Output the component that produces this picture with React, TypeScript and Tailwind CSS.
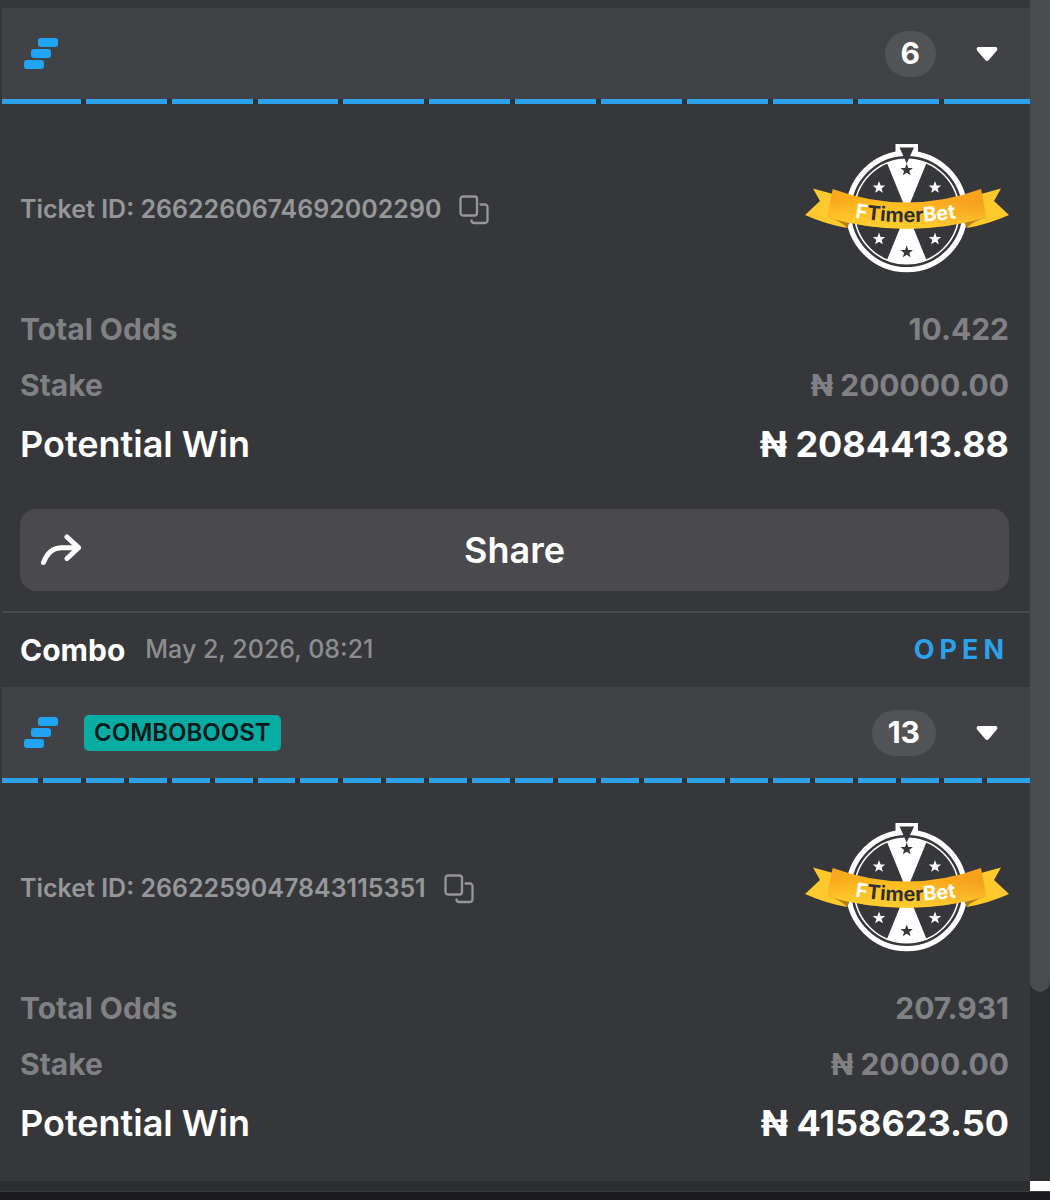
import { useState } from "react";

type Ticket = {
  id: string;
  type?: string;
  date?: string;
  status?: string;
  boost?: string;
  selections: number;
  segments: number;
  odds: string;
  stake: string;
  win: string;
  shareable: boolean;
};

const tickets: Ticket[] = [
  {
    id: "2662260674692002290",
    selections: 6,
    segments: 12,
    odds: "10.422",
    stake: "200000.00",
    win: "2084413.88",
    shareable: true,
  },
  {
    id: "2662259047843115351",
    type: "Combo",
    date: "May 2, 2026, 08:21",
    status: "OPEN",
    boost: "COMBOBOOST",
    selections: 13,
    segments: 24,
    odds: "207.931",
    stake: "20000.00",
    win: "4158623.50",
    shareable: false,
  },
];

function StepsIcon() {
  return (
    <svg className="h-8 w-[34px]" viewBox="0 0 34 32" fill="#22a4f5" aria-hidden="true">
      <rect x="14" y="0" width="20" height="9" rx="3" />
      <rect x="7" y="11" width="20" height="9" rx="3" />
      <rect x="0" y="22" width="20" height="9" rx="3" />
    </svg>
  );
}

function CaretIcon({ open }: { open: boolean }) {
  return (
    <svg className={open ? "h-4 w-[22px]" : "h-4 w-[22px] rotate-180"} viewBox="0 0 22 16" fill="#fff" aria-hidden="true">
      <path d="M2.600 1h16.800c1.900 0 2.600 2 1.500 3.400L12.800 14c-.9 1.200-2.700 1.200-3.600 0L1.100 4.400C0 3 .7 1 2.600 1z" />
    </svg>
  );
}

function CopyIcon() {
  return (
    <svg className="h-[30px] w-[30px]" viewBox="0 0 30 30" fill="none" stroke="#96979b" strokeWidth="2.300" strokeLinecap="round" aria-hidden="true">
      <rect x="1.500" y="1.500" width="16.500" height="19" rx="2.500" />
      <path d="M21.500 9.500H26a2.500 2.500 0 0 1 2.500 2.500V25.500a2.500 2.500 0 0 1-2.500 2.500H15.500C13.500 28 12.500 27 12.500 25.500" />
    </svg>
  );
}

function ShareIcon() {
  return (
    <svg className="h-[34px] w-[42px]" viewBox="0 0 42 34" fill="none" stroke="#fff" strokeWidth="5" strokeLinecap="round" strokeLinejoin="round" aria-hidden="true">
      <path d="M3.500 29.500C7 20 13 14.700 22 14.700H38" />
      <path d="M27 4L38.500 14.700L27 25.500" />
    </svg>
  );
}

const STAR = "M0-6.500L1.600-2.100L6.200-2L2.600.900L3.900 5.300L0 2.700L-3.900 5.300L-2.600.900L-6.200-2L-1.600-2.100Z";

function TimerBetLogo({ uid }: { uid: string }) {
  return (
    <svg className="h-[130px] w-[204px]" viewBox="0 0 204 130" role="img" aria-label="FTimerBet">
      <defs>
        <linearGradient id={`band-${uid}`} x1="0" y1="0" x2="1" y2="0.300">
          <stop offset="0" stopColor="#f8a21b" />
          <stop offset="0.300" stopColor="#fcb31d" />
          <stop offset="0.500" stopColor="#fdbb20" />
          <stop offset="0.750" stopColor="#fbaa1d" />
          <stop offset="1" stopColor="#f59c1c" />
        </linearGradient>
        <linearGradient id={`shine-${uid}`} x1="0" y1="0" x2="0" y2="1">
          <stop offset="0.300" stopColor="#ffd633" stopOpacity="0" />
          <stop offset="1" stopColor="#ffd633" stopOpacity="0.800" />
        </linearGradient>
        <path id={`arc-${uid}`} d="M30 71Q102 87 174 71" />
      </defs>
      <circle cx="101.700" cy="68.500" r="58.200" fill="#36373b" stroke="#fff" strokeWidth="5.200" />
      <circle cx="101.700" cy="68.500" r="52.300" fill="none" stroke="#fff" strokeWidth="1.600" />
      <path d="M82 20Q101.700 12 121.500 20L101.700 68.500L121.500 117Q101.700 125 82 117L101.700 68.500Z" fill="#fff" />
      <path d="M90.500 1H113V11H90.500Z" fill="#fff" />
      <path d="M94.500 4.500H109L101.700 20.500Z" fill="#36373b" />
      <g fill="#36373b">
        <path d={STAR} transform="translate(101.700 27)" />
        <path d={STAR} transform="translate(101.700 109)" />
      </g>
      <g fill="#fff">
        <path d={STAR} transform="translate(74 44.500)" />
        <path d={STAR} transform="translate(130 44.500)" />
        <path d={STAR} transform="translate(74 96)" />
        <path d={STAR} transform="translate(130 96)" />
      </g>
      <path d="M8 45.500L28 51L44 80L42 85Q20 81 0 72L15 58Z" fill="#fdc92c" />
      <path d="M196 45.500L176 51L160 80L162 85Q184 81 204 72L189 58Z" fill="#fdc92c" />
      <path d="M22 74L45 79L42 85Q38 79 22 74Z" fill="#b97c15" />
      <path d="M182 74L159 79L162 85Q166 79 182 74Z" fill="#b97c15" />
      <path d="M27.700 46Q101.700 73 176 46L181.500 74.500Q101.700 97 22 74.500Z" fill={`url(#band-${uid})`} />
      <path d="M27.700 46Q101.700 73 176 46L181.500 74.500Q101.700 97 22 74.500Z" fill={`url(#shine-${uid})`} />
      <text className="font-['Inter',sans-serif] text-[20px] font-bold" textAnchor="middle">
        <textPath href={`#arc-${uid}`} startOffset="49%">
          <tspan fill="#fff">F</tspan>
          <tspan fill="#2e2f33">Timer</tspan>
          <tspan fill="#fff">Bet</tspan>
        </textPath>
      </text>
    </svg>
  );
}

function SegmentBar({ count }: { count: number }) {
  return (
    <div className="-ml-0.5 grid h-[5px] auto-cols-fr grid-flow-col bg-[#2f3034]">
      {Array.from({ length: count }, (_, i) => (
        <div key={i} className="border-r-[5px] border-[#2f3034] bg-[#2ca2ec] last:border-r-0" />
      ))}
    </div>
  );
}

function TicketCard({ ticket }: { ticket: Ticket }) {
  const [open, setOpen] = useState(true);

  return (
    <article>
      {ticket.type && (
        <div className="flex h-[76px] items-center border-t-2 border-[#4a4b50] pr-[21px] pl-[18px]">
          <h2 className="text-[30px] font-bold text-white">{ticket.type}</h2>
          <time className="ml-5 text-[25px] font-medium text-[#8d8e92]">{ticket.date}</time>
          <span className="ml-auto text-[27px] font-bold tracking-[5px] text-[#2ca2ec]">{ticket.status}</span>
        </div>
      )}
      <header className="flex h-[91px] items-center bg-[#414245] pr-8 pl-[22px]">
        <StepsIcon />
        {ticket.boost && (
          <span className="ml-[26px] rounded-[5px] bg-[#09aca3] px-2.5 text-[24px] leading-9 font-semibold text-[#06191c]">
            {ticket.boost}
          </span>
        )}
        <span className="ml-auto flex h-[46px] min-w-[50px] items-center justify-center rounded-full bg-[#525357] px-4 text-[30px] font-bold text-white">
          {ticket.selections}
        </span>
        <button type="button" className="ml-10" aria-label="Toggle ticket" aria-expanded={open} onClick={() => setOpen(!open)}>
          <CaretIcon open={open} />
        </button>
      </header>
      <SegmentBar count={ticket.segments} />
      {open && (
        <div className="pt-[39px] pr-[21px] pl-[18px]">
          <div className="flex items-center justify-between">
            <div className="flex items-center gap-[18px] pt-1 text-[25px] font-semibold text-[#96979b]">
              <p>Ticket ID: {ticket.id}</p>
              <button type="button" aria-label="Copy ticket ID" onClick={() => navigator.clipboard?.writeText(ticket.id)}>
                <CopyIcon />
              </button>
            </div>
            <TimerBetLogo uid={ticket.id} />
          </div>
          <dl className="mt-7 text-[30px] leading-[56px] font-bold text-[#808185]">
            <div className="flex justify-between">
              <dt>Total Odds</dt>
              <dd>{ticket.odds}</dd>
            </div>
            <div className="flex justify-between">
              <dt>Stake</dt>
              <dd>₦ {ticket.stake}</dd>
            </div>
            <div className="flex justify-between text-[36px] leading-[62px] text-white">
              <dt className="font-semibold">Potential Win</dt>
              <dd>₦ {ticket.win}</dd>
            </div>
          </dl>
          {ticket.shareable ? (
            <div className="pt-[34px] pb-5">
              <button type="button" className="grid h-[82px] w-full grid-cols-[42px_1fr_42px] items-center rounded-2xl bg-[#4a494d] px-5 text-[36px] font-semibold text-white">
                <ShareIcon />
                <span>Share</span>
              </button>
            </div>
          ) : (
            <div className="h-[27px]" />
          )}
        </div>
      )}
    </article>
  );
}

export default function App() {
  return (
    <div className="min-h-screen bg-[#1c1c1f] font-['Inter','Noto_Sans',sans-serif]">
      <div className="flex bg-[#36373b]">
        <main className="min-w-0 flex-1 overflow-hidden border-l-2 border-[#36373b] pt-2">
          {tickets.map((ticket) => (
            <TicketCard key={ticket.id} ticket={ticket} />
          ))}
        </main>
        <div className="w-5 bg-[#2c2d30]">
          <div className="h-[84%] rounded-b-full bg-[#4b4c50]" />
        </div>
      </div>
      <div className="flex h-[11px] border-b border-[#3a3b3e] bg-[#2d2e31]">
        <div className="flex-1" />
        <div className="w-5 bg-white" />
      </div>
    </div>
  );
}
